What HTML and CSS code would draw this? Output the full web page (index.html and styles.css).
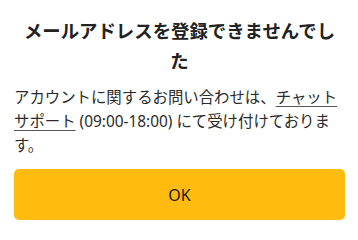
FILE: index.html
```html
<!DOCTYPE html>
<html lang="ja">
<head>
<meta charset="utf-8">
<link rel="stylesheet" href="styles.css">
</head>
<body>
<div class="dialog">
  <h1 class="title">メールアドレスを登録できませんでした</h1>
  <p class="message">アカウントに関するお問い合わせは、<a class="link" href="#">チャットサポート</a> (09:00-18:00) にて受け付けております。</p>
  <button class="ok-button" type="button">OK</button>
</div>
</body>
</html>
```
FILE: styles.css
```css
html, body {
  margin: 0;
  padding: 0;
  background: #ffffff;
}
body {
  font-family: "Noto Sans", "Noto Sans CJK JP", sans-serif;
  color: #222222;
}
.dialog {
  display: flex;
  flex-direction: column;
  padding: 16px 13px 0 14px;
}
.title {
  margin: 0;
  padding: 0 8px;
  font-size: 18.4px;
  line-height: 30px;
  font-weight: 700;
  text-align: center;
  color: #222222;
}
.message {
  margin: 10px 0 0;
  font-size: 15.4px;
  line-height: 24px;
  color: #2b2b2b;
}
.link {
  color: inherit;
  text-decoration: underline;
  text-decoration-color: #555555;
  text-underline-offset: 3px;
}
.ok-button {
  margin-top: 11px;
  height: 51px;
  border: none;
  border-radius: 5px;
  background: #ffbb0e;
  font-family: "Noto Sans", "Noto Sans CJK JP", sans-serif;
  font-size: 16px;
  color: #1a1a1a;
  padding: 0;
}
```
